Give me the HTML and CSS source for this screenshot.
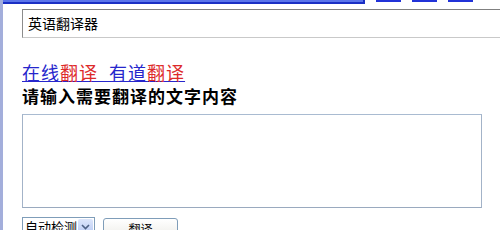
FILE: index.html
```html
<!DOCTYPE html>
<html lang="zh-CN">
<head>
    <meta charset="UTF-8">
    <meta name="viewport" content="width=device-width, initial-scale=1.0">
    <title>英语翻译器</title>
    <link rel="stylesheet" href="styles.css">
</head>
<body>
    <div class="page">
        <div class="edge"></div>
        <div class="main">
            <div class="top">
                <div class="searchbar"></div>
                <div class="tab"></div>
                <div class="tab"></div>
                <div class="tab"></div>
            </div>
            <div class="query">英语翻译器</div>

            <a class="title" href="#">在线<em>翻译</em>_有道<em>翻译</em></a>
            <div class="prompt">请输入需要翻译的文字内容</div>
            <div class="textbox"></div>

            <div class="controls">
                <div class="select">
                    <span class="value">自动检测</span>
                    <span class="arrow">
                        <svg width="9" height="6" viewBox="0 0 9 6">
                            <path d="M1 1 L4.5 4.5 L8 1" fill="none" stroke="#4d6185" stroke-width="1.6"/>
                        </svg>
                    </span>
                </div>
                <div class="button">翻译</div>
            </div>
        </div>
    </div>
</body>
</html>
```

FILE: styles.css
```css
body{
    margin: 0;
    background: #fff;
    font-family: "Noto Sans CJK SC", "DejaVu Sans", sans-serif;
    overflow: hidden;
}
.page{
    display: flex;
    height: 230px;
    overflow: hidden;
}
.edge{
    width: 3px;
    background: #a3aedb;
    flex: none;
}
.main{
    flex: 1;
    padding-left: 19px;
}

/* cut off search box and tabs above */
.top{
    display: flex;
    align-items: flex-start;
    height: 4px;
    margin-left: -19px;
}
.searchbar{
    width: 360px;
    height: 1px;
    background: #5a74ea;
    border-bottom: 2px solid #1a2fc4;
    border-right: 2px solid #1a2fc4;
    padding-bottom: 1px;
}
.tab{
    width: 25px;
    height: 2px;
    background: #2233d8;
    margin-left: 11px;
}
.tab:first-of-type{
    margin-left: 2px;
}

.query{
    margin-top: 5px;
    width: 490px;
    height: 27px;
    border: 1px solid;
    border-color: #808080 #c9c9c9 #c9c9c9 #8c8c8c;
    padding-left: 5px;
    font-size: 14px;
    line-height: 27px;
    color: #000;
}

.title{
    display: block;
    width: max-content;
    margin-top: 25px;
    font-size: 18px;
    line-height: 19px;
    color: #2626cc;
    text-decoration: underline;
    letter-spacing: 1px;
}
.title em{
    font-style: normal;
    color: #dd2a2a;
}
.prompt{
    margin-top: 4px;
    font-size: 17px;
    line-height: 20px;
    font-weight: bold;
    color: #000;
    letter-spacing: 1px;
}
.textbox{
    margin-top: 8px;
    width: 458px;
    height: 92px;
    border: 1px solid;
    border-color: #a9bbd1 #a3b3c8 #9aaabf #a3b3c8;
}

.controls{
    display: flex;
    align-items: flex-start;
    margin-top: 9px;
}
.select{
    display: flex;
    width: 71px;
    height: 18px;
    border: 1px solid #7f9db9;
    font-size: 13px;
    line-height: 18px;
}
.select .value{
    flex: 1;
    padding-left: 2px;
}
.select .arrow{
    width: 15px;
    margin: 1px;
    background: linear-gradient(#dde6fb, #b7c9f3);
    border-radius: 2px;
    display: flex;
    align-items: center;
    justify-content: center;
}
.button{
    margin-left: 8px;
    margin-top: 1px;
    width: 73px;
    height: 20px;
    border: 1px solid #7f9db9;
    border-radius: 3px;
    background: linear-gradient(#ffffff, #ecebe6);
    text-align: center;
    font-size: 12px;
    line-height: 20px;
}
```
